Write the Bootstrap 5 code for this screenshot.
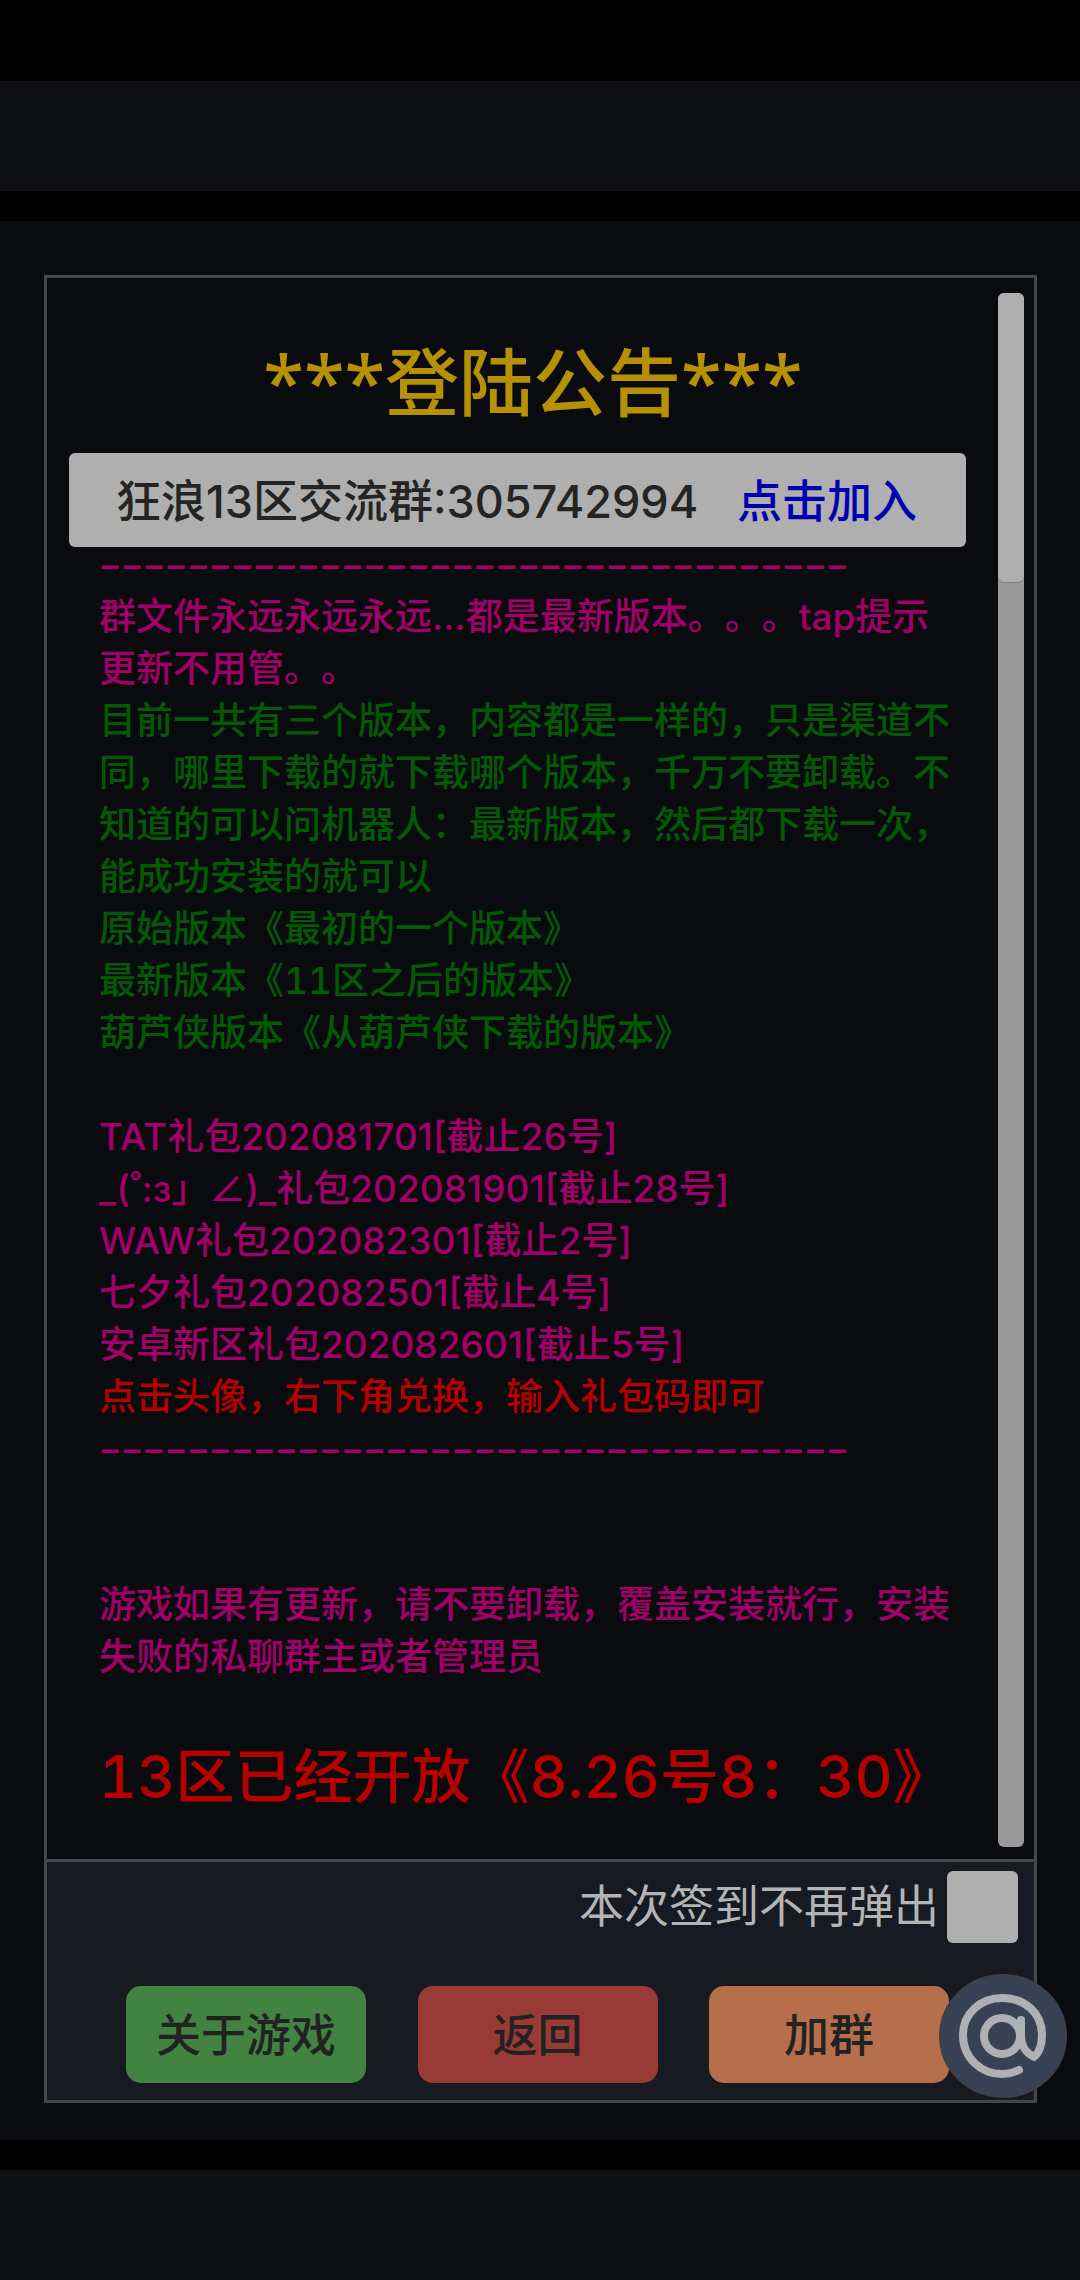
<!DOCTYPE html>
<html lang="zh-CN">
<head>
<meta charset="utf-8">
<meta name="viewport" content="width=device-width, initial-scale=1">
<title>登陆公告</title>
<link href="https://cdn.jsdelivr.net/npm/bootstrap@5.3.0/dist/css/bootstrap.min.css" rel="stylesheet">
<style>
  body { background: #000; font-family: Inter, "Noto Sans CJK SC", sans-serif; font-weight: 500; text-spacing-trim: space-all; }
  .status-gap { height: 81px; }
  .top-strip { height: 110px; background: #0f1014; }
  .strip-gap { height: 30px; }
  .stage { background: #0a0b0f; padding: 54px 43px 37px 44px; }
  .bottom-strip { background: #0f1014; }
  .notice-panel { border: 3px solid #464749; }
  .notice-scroll { padding: 15px 10px 12px 52px; gap: 31px; }
  .notice-body { font-size: 37px; line-height: 52px; color: #a00068; min-width: 0; padding-bottom: 28px; }
  .notice-title { font-family: "Noto Sans", "Noto Sans CJK SC", sans-serif; font-size: 74px; line-height: 104px; font-weight: 500; color: #b69106; margin: 37px 0 19px; }
  .group-bar { background: #afafaf; border-radius: 6px; height: 94px; padding: 3px 49px 0 47px; margin: 0 1px 0 -30px; font-size: 45px; color: #242424; }
  .group-bar a { color: #0000b0; text-decoration: none; }
  .dash-rule { font-family: Lato, sans-serif; font-size: 38px; font-weight: 700; }
  .dash-first { line-height: 37px; margin-bottom: 7px; }
  .txt-green { color: #045904; }
  .txt-red { color: #b40000; }
  .even-digits { font-variant-numeric: tabular-nums; }
  .open-line { font-size: 59px; line-height: 84px; margin-top: 52px; }
  .scroll-track { width: 26px; background: #999; border-radius: 6px; }
  .scroll-thumb { height: 290px; background: #afafaf; border-radius: 6px; border-bottom: 1px solid #808080; }
  .notice-foot { border-top: 3px solid #464749; background: #181a22; padding: 9px 16px 17px 79px; }
  .skip-label { font-size: 45px; line-height: 72px; font-weight: 400; color: #b4b4b4; }
  .skip-check.form-check-input { width: 71px; height: 72px; margin: 0; border: 0; border-radius: 6px; background-color: #afafaf; }
  .foot-actions { gap: 50px; margin-top: 43px; padding-right: 69px; }
  .foot-actions .btn { width: 240px; height: 97px; padding: 2px 0 0; border: 0; border-radius: 15px; font-size: 45px; font-weight: 500; color: #222; }
  .btn-about { background: #428342; }
  .btn-back { background: #9a3a37; }
  .btn-join { background: #b66f4a; }
  .float-at { right: -33px; bottom: 2px; width: 128px; height: 124px; }
</style>
</head>
<body class="d-flex flex-column min-vh-100">
  <div class="status-gap"></div>
  <header class="top-strip"></header>
  <div class="strip-gap"></div>

  <main class="stage">
    <section class="notice-panel position-relative">
      <div class="notice-scroll d-flex">
        <div class="notice-body flex-grow-1">
          <h1 class="notice-title text-center">***登陆公告***</h1>
          <div class="group-bar d-flex align-items-center justify-content-between">
            <span>狂浪13区交流群:305742994</span>
            <a href="#join">点击加入</a>
          </div>
          <div class="dash-rule dash-first">−−−−−−−−−−−−−−−−−−−−−−−−−−−−−−−−−−</div>
          <div>群文件永远永远永远...都是最新版本。。。tap提示<br>更新不用管。。</div>
          <div class="txt-green even-digits">
            <div>目前一共有三个版本，内容都是一样的，只是渠道不同，哪里下载的就下载哪个版本，千万不要卸载。不知道的可以问机器人：最新版本，然后都下载一次，能成功安装的就可以</div>
            <div>原始版本《最初的一个版本》</div>
            <div>最新版本《11区之后的版本》</div>
            <div>葫芦侠版本《从葫芦侠下载的版本》</div>
          </div>
          <br>
          <div>TAT礼包202081701[截止26号]</div>
          <div>_(˚:з」∠)_礼包202081901[截止28号]</div>
          <div>WAW礼包202082301[截止2号]</div>
          <div>七夕礼包202082501[截止4号]</div>
          <div>安卓新区礼包202082601[截止5号]</div>
          <div class="txt-red">点击头像，右下角兑换，输入礼包码即可</div>
          <div class="dash-rule">−−−−−−−−−−−−−−−−−−−−−−−−−−−−−−−−−−</div>
          <br><br>
          <div>游戏如果有更新，请不要卸载，覆盖安装就行，安装失败的私聊群主或者管理员</div>
          <div class="open-line txt-red even-digits text-nowrap">13区已经开放《8.26号8：30》</div>
        </div>
        <div class="scroll-track flex-shrink-0"><div class="scroll-thumb"></div></div>
      </div>

      <footer class="notice-foot">
        <div class="d-flex justify-content-end align-items-center gap-2">
          <label class="skip-label" for="skip">本次签到不再弹出</label>
          <input class="form-check-input skip-check" type="checkbox" id="skip">
        </div>
        <div class="foot-actions d-flex justify-content-between">
          <button type="button" class="btn btn-about">关于游戏</button>
          <button type="button" class="btn btn-back">返回</button>
          <button type="button" class="btn btn-join">加群</button>
        </div>
      </footer>

      <button type="button" class="float-at position-absolute border-0 bg-transparent p-0" aria-label="@">
        <svg class="d-block" width="128" height="124" viewBox="0 0 128 124" fill="none" stroke="#adb0b4" stroke-width="8" stroke-linecap="round" stroke-linejoin="round">
          <ellipse cx="64" cy="62" rx="63" ry="61" fill="#374354" stroke="#3c4248" stroke-width="2"/>
          <circle cx="63" cy="62" r="18"/>
          <path d="M82 46V60C82 73 87 79 95 83C101 78 103 69 103 61C103 39 86 24 63 24C41 24 24 40 24 61C24 84 42 100 63 100C70 100 76 98 80 96"/>
        </svg>
      </button>
    </section>
  </main>

  <div class="strip-gap"></div>
  <div class="bottom-strip flex-grow-1"></div>
<script src="https://cdn.jsdelivr.net/npm/bootstrap@5.3.0/dist/js/bootstrap.bundle.min.js"></script>
</body>
</html>
